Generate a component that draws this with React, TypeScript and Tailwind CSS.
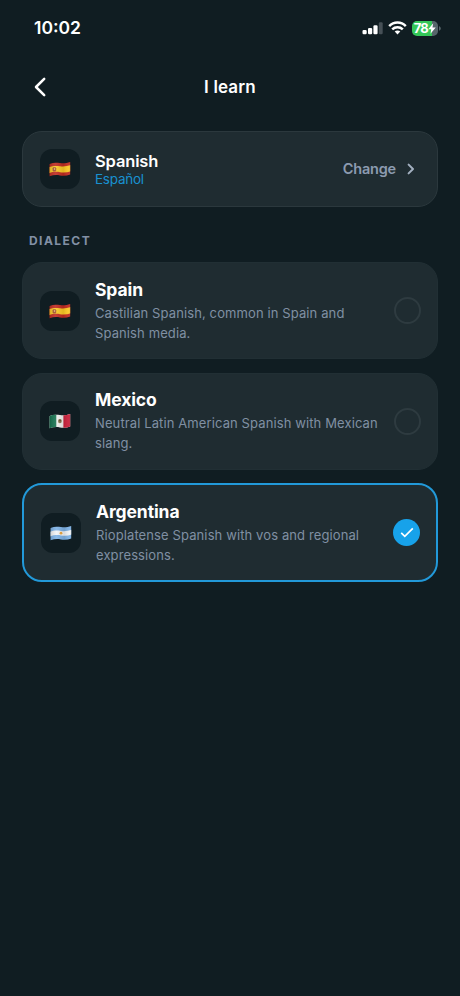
import { useState } from 'react';
import clsx from 'clsx';

type FlagCode = 'es' | 'mx' | 'ar';

const FLAG_SHAPE =
  'M0.6 2.9 C4 1.4 7.5 1.5 11 2.1 C14.5 2.7 18 2.1 21.2 0.9 V13.5 C18 14.7 14.5 15 11 14.4 C7.5 13.8 4 13.9 0.6 15.3 Z';

function Flag({ code, id }: { code: FlagCode; id: string }) {
  return (
    <svg width="22" height="16" viewBox="0 0 22 16">
      <defs>
        <clipPath id={`${id}-clip`}>
          <path d={FLAG_SHAPE} />
        </clipPath>
        <linearGradient id={`${id}-shade`} x1="0" x2="1" y1="0" y2="0">
          <stop offset="0" stopColor="#000" stopOpacity="0.15" />
          <stop offset="0.3" stopColor="#fff" stopOpacity="0.1" />
          <stop offset="0.65" stopColor="#000" stopOpacity="0.1" />
          <stop offset="0.9" stopColor="#fff" stopOpacity="0.06" />
          <stop offset="1" stopColor="#000" stopOpacity="0.25" />
        </linearGradient>
      </defs>
      <g clipPath={`url(#${id}-clip)`}>
        {code === 'es' && (
          <>
            <rect width="22" height="16" fill="#c02a20" />
            <path
              d="M0 6.1 C4 4.6 7.5 4.7 11 5.3 C14.5 5.9 18 5.3 22 4.1 V10.2 C18 11.5 14.5 11.8 11 11.2 C7.5 10.6 4 10.7 0 12.2 Z"
              fill="#fbc824"
            />
            <rect x="3.6" y="6.2" width="3.6" height="4.2" rx="1" fill="#a5522a" />
            <rect x="4.9" y="7" width="1.2" height="2" fill="#dca26a" />
          </>
        )}
        {code === 'mx' && (
          <>
            <rect width="22" height="16" fill="#f1f1ee" />
            <rect width="7.3" height="16" fill="#13704d" />
            <rect x="14.4" width="7.6" height="16" fill="#c8203a" />
            <ellipse cx="10.9" cy="8.1" rx="1.9" ry="2.2" fill="#8c7a52" />
            <ellipse cx="11" cy="7.5" rx="0.8" ry="1" fill="#5c4026" />
          </>
        )}
        {code === 'ar' && (
          <>
            <rect width="22" height="16" fill="#7db2e6" />
            <path
              d="M0 6.8 C4 5.3 7.5 5.4 11 6 C14.5 6.6 18 6 22 4.8 V9.4 C18 10.7 14.5 11 11 10.4 C7.5 9.8 4 9.9 0 11.4 Z"
              fill="#f2f4f6"
            />
            <circle cx="11" cy="8.2" r="1.4" fill="#e8a33c" />
          </>
        )}
        <rect width="22" height="16" fill={`url(#${id}-shade)`} />
      </g>
    </svg>
  );
}

function FlagTile({ code, id }: { code: FlagCode; id: string }) {
  return (
    <div className="flex size-10 shrink-0 items-center justify-center rounded-xl bg-[#101d22]">
      <Flag code={code} id={id} />
    </div>
  );
}

function StatusBar() {
  return (
    <div className="flex h-14 items-center justify-between pr-[19px] pl-[34px]">
      <span className="text-[17.5px] font-semibold text-white">10:02</span>
      <div className="flex items-center">
        <svg width="21" height="13" viewBox="0 0 21 13" fill="#fff">
          <rect x="0.5" y="7.9" width="4.2" height="4.4" rx="1.2" />
          <rect x="6" y="5.9" width="4.2" height="6.4" rx="1.2" />
          <rect x="11.4" y="3.2" width="4.2" height="9.1" rx="1.2" />
          <rect x="16.8" y="0.3" width="3.9" height="12" rx="1.2" fill="#465056" />
        </svg>
        <svg className="ml-[5px]" width="19" height="14" viewBox="0 0 19 14" fill="none" stroke="#fff" strokeWidth="2.5">
          <path d="M1.2 5.1 C5.8 0.4 13.2 0.4 17.8 5.1" />
          <path d="M4.2 8.3 C7.1 5.5 11.9 5.5 14.8 8.3" />
          <path d="M9.5 13.4 L6.7 10.6 C8.2 9.2 10.8 9.2 12.3 10.6 Z" fill="#fff" stroke="none" />
        </svg>
        <div className="ml-[5px] flex h-[15px] w-[26px] items-center justify-center rounded-[5px] bg-linear-to-r from-[#34c759] from-78% to-[#56656a] to-78%">
          <span className="text-[13px] leading-none font-bold tracking-[-0.9px] text-white">78</span>
          <svg className="ml-[0.5px]" width="8" height="11" viewBox="0 0 8 11" fill="#fff">
            <path d="M5.2 0.2 L0.3 6.2 H3.2 L2.5 10.8 L7.7 4.6 H4.5 Z" />
          </svg>
        </div>
        <svg className="ml-px" width="2" height="5" viewBox="0 0 2 5">
          <path d="M0 0.3 C2.4 1 2.4 4 0 4.7 Z" fill="#56656a" />
        </svg>
      </div>
    </div>
  );
}

const DIALECTS: { code: FlagCode; name: string; description: string }[] = [
  { code: 'es', name: 'Spain', description: 'Castilian Spanish, common in Spain and Spanish media.' },
  { code: 'mx', name: 'Mexico', description: 'Neutral Latin American Spanish with Mexican slang.' },
  { code: 'ar', name: 'Argentina', description: 'Rioplatense Spanish with vos and regional expressions.' },
];

export default function App() {
  const [selected, setSelected] = useState<FlagCode>('ar');

  return (
    <div className="min-h-screen bg-[#101d22] font-['Inter',sans-serif]">
      <StatusBar />

      <header className="grid h-[62px] grid-cols-[1fr_auto_1fr] items-center px-[34px]">
        <button aria-label="Back">
          <svg width="12" height="20" viewBox="0 0 12 20" fill="none" stroke="#fff" strokeWidth="2.5">
            <path d="M10.2 1.8 L2 10 L10.2 18.2" strokeLinecap="round" strokeLinejoin="round" />
          </svg>
        </button>
        <h1 className="pt-px text-[17px] font-semibold tracking-[0.15px] text-white">I learn</h1>
      </header>

      <main className="px-[22px] pt-[13px]">
        <button className="flex h-[76px] w-full items-center rounded-[20px] border border-[#2b383d] bg-[#1f2c31] px-[17px] text-left">
          <FlagTile code="es" id="current" />
          <div className="ml-[15px] flex-1">
            <div className="text-[16.5px] leading-[20px] font-semibold tracking-[-0.15px] text-white">Spanish</div>
            <div className="text-[13.5px] leading-[16px] tracking-[-0.25px] text-[#1991d0]">Español</div>
          </div>
          <span className="text-[14.5px] font-semibold tracking-[-0.2px] text-[#8c9bb0]">Change</span>
          <svg className="mr-[5px] ml-[11px]" width="8" height="12" viewBox="0 0 8 12" fill="none" stroke="#a3b0c0" strokeWidth="2">
            <path d="M1.6 1.6 L6 6 L1.6 10.4" strokeLinecap="round" strokeLinejoin="round" />
          </svg>
        </button>

        <h2 className="mt-[26px] pl-[7px] text-[12px] leading-4 font-bold tracking-[1.45px] text-[#8290a5]">DIALECT</h2>

        <div className="mt-[13px] flex flex-col gap-[13.5px]">
          {DIALECTS.map(({ code, name, description }) => {
            const active = code === selected;
            return (
              <button
                key={code}
                onClick={() => setSelected(code)}
                className={clsx(
                  'flex w-full items-center rounded-[20px] bg-[#1f2c31] pr-4 pl-[17px] text-left',
                  active ? 'h-[99px] border-2 border-[#2299d9]' : 'h-[97px] border border-[#212f34]',
                )}
              >
                <FlagTile code={code} id={code} />
                <div className="ml-[15px] flex-1">
                  <div className="text-[17.5px] leading-[22px] font-bold tracking-[-0.1px] text-white">{name}</div>
                  <div className="mt-0.5 w-[288px] text-[13px] leading-[20px] tracking-[0.11px] text-[#8090a3]">
                    {description}
                  </div>
                </div>
                {active ? (
                  <span className="flex size-[27px] shrink-0 items-center justify-center rounded-full bg-[#17a2ea]">
                    <svg width="14" height="11" viewBox="0 0 14 11" fill="none" stroke="#fff" strokeWidth="1.7">
                      <path d="M1.2 5.8 L4.8 9.4 L12.8 1.4" />
                    </svg>
                  </span>
                ) : (
                  <span className="size-[27px] shrink-0 rounded-full border-2 border-[#2e3b40]" />
                )}
              </button>
            );
          })}
        </div>
      </main>
    </div>
  );
}
